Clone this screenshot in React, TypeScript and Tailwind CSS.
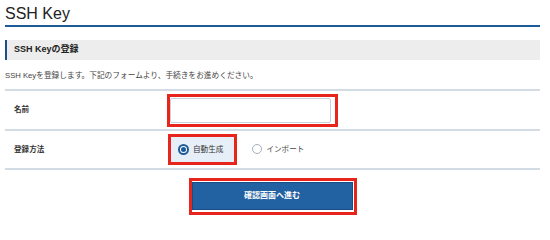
import React from 'react';

// SSH key registration form

const font = { fontFamily: '"Liberation Sans", "Noto Sans CJK JP", sans-serif' };

const App = () => {
  return (
    <div className="w-[550px] h-[229px] bg-white pl-[5px] pr-[10px] text-[#333]" style={font}>
      {/* page title */}
      <div className="pt-[4px] pb-[1px] text-[16px] leading-[20px] text-[#222] border-b-2 border-[#1d5a9a]">
        SSH Key
      </div>

      {/* section header */}
      <div className="mt-[13px] h-[20px] flex items-center bg-[#ededed] border-l-2 border-[#1d4f8f] pl-[7px]">
        <span className="text-[9px] font-bold text-[#222]">SSH Keyの登録</span>
      </div>

      <p className="mt-[10px] mb-[7px] text-[7.7px] leading-[12px] text-[#444]">
        SSH Keyを登録します。下記のフォームより、手続きをお進めください。
      </p>

      {/* form rows */}
      <div className="border-t-2 border-[#d3dbe4]">
        <div className="flex items-center h-[40px] border-b-2 border-[#d3dbe4]">
          <div className="w-[162px] pl-[9px] text-[7.6px] font-bold">名前</div>
          <div className="border-[3px] border-[#e8251d] pt-[1px] pb-[1px] pr-[4px]">
            <input
              type="text"
              className="block w-[161px] h-[25px] border-[1.5px] border-[#c6d1dd] rounded-[2px] bg-white outline-none"
            />
          </div>
        </div>

        <div className="flex items-center h-[39px] border-b-2 border-[#d3dbe4]">
          <div className="w-[163px] pl-[9px] text-[7.6px] font-bold">登録方法</div>
          <div className="flex items-center">
            <div className="border-[3px] border-[#e8251d]">
              <div className="flex items-center h-[25px] pl-[7px] pr-[11px] bg-[#e6eef7]">
                <span className="w-[11px] h-[11px] rounded-full border-2 border-[#1d5a9a] bg-white flex items-center justify-center">
                  <span className="w-[5px] h-[5px] rounded-full bg-[#1d5a9a]" />
                </span>
                <span className="ml-[4px] text-[7.6px]">自動生成</span>
              </div>
            </div>
            <div className="flex items-center ml-[15px]">
              <span className="w-[10px] h-[10px] rounded-full border-[1.5px] border-[#a3afbc] bg-white" />
              <span className="ml-[4px] text-[7.6px] text-[#444]">インポート</span>
            </div>
          </div>
        </div>
      </div>

      {/* submit */}
      <div className="flex justify-center pt-[8px]">
        <div className="border-[3px] border-[#e8251d] pt-[1px] pb-[2px] pl-0 pr-[1px]">
          <button
            type="button"
            className="block w-[161px] h-[28px] bg-[#2362a2] border border-[#1a4d86] text-white text-[8px] font-bold"
          >
            確認画面へ進む
          </button>
        </div>
      </div>
    </div>
  );
};

export default App;
